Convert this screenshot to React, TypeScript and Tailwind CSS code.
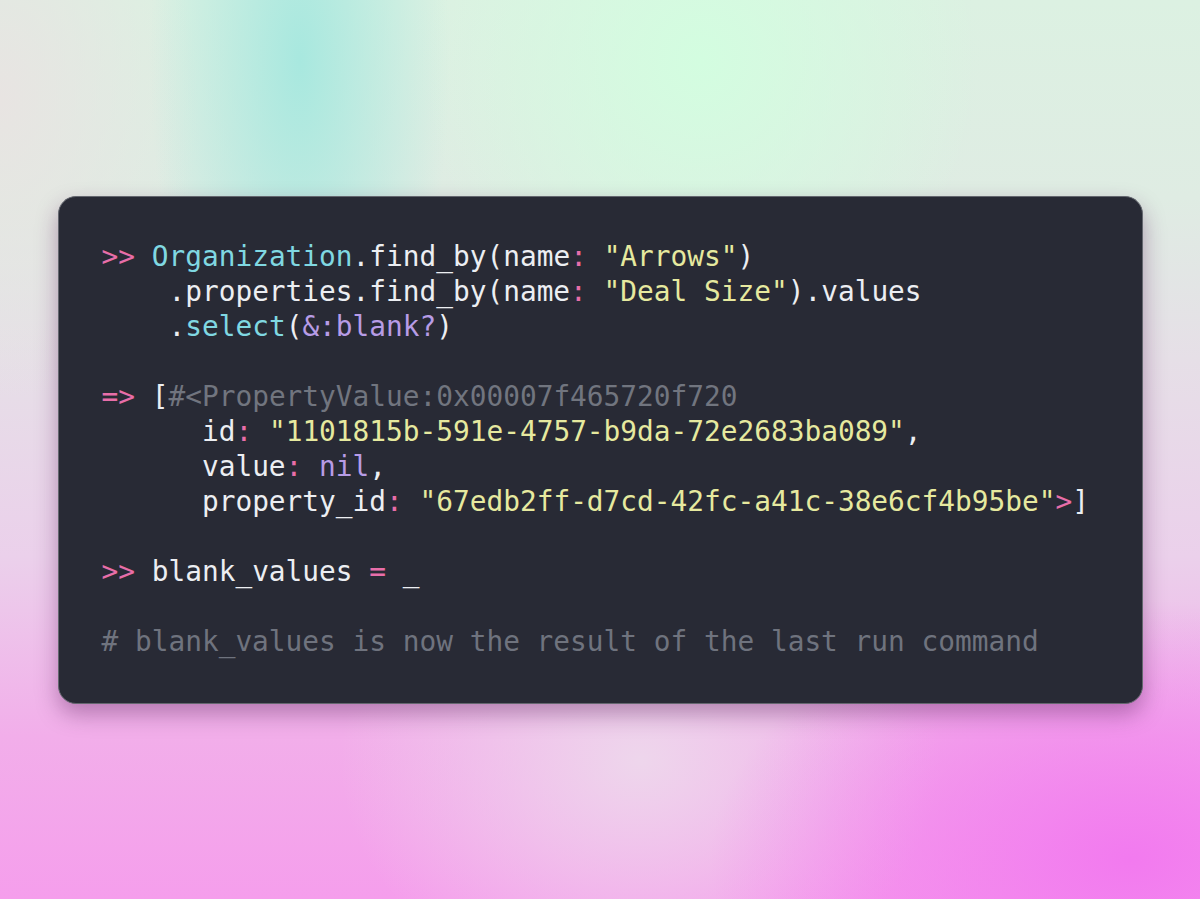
const Prompt = ({ children }: { children: React.ReactNode }) => (
    <span className="text-[#e86ea9]">{children}</span>
);

const Str = ({ children }: { children: React.ReactNode }) => (
    <span className="text-[#e6e99f]">{children}</span>
);

export default function App() {
    return (
        <div className="w-[1200px] h-[899px] flex items-center justify-center bg-[radial-gradient(ellipse_150px_400px_at_300px_60px,#a8e8df_0%,rgba(168,232,223,0.6)_40%,rgba(168,232,223,0)_100%),radial-gradient(ellipse_200px_300px_at_0px_100px,#e8e4e2_0%,rgba(232,228,226,0)_100%),radial-gradient(ellipse_280px_300px_at_700px_60px,#d3fde0_0%,rgba(211,253,224,0)_100%),radial-gradient(ellipse_420px_260px_at_1130px_860px,#f27aef_0%,rgba(242,122,239,0)_100%),radial-gradient(ellipse_300px_240px_at_640px_760px,#eed6ec_0%,rgba(238,214,236,0)_100%),linear-gradient(to_bottom,#dcf1e2_0%,#dfece3_22%,#e6dfe7_40%,#ebd0eb_62%,#f2aeea_82%,#f59eec_100%)]">
            <div className="w-[1085px] rounded-[18px] border-[1.5px] border-[#64676f] bg-[#282a35] px-[43px] pt-[42px] pb-[44px] shadow-[0_10px_22px_rgba(90,30,90,0.4)]">
                <pre className="m-0 whitespace-pre font-['DejaVu_Sans_Mono',monospace] text-[27.8px] leading-[35px] text-[#eceef2]">
                    <Prompt>&gt;&gt;</Prompt> <span className="text-[#80d8e2]">Organization</span>.find_by(name<Prompt>:</Prompt> <Str>"Arrows"</Str>){"\n"}
                    {"    "}.properties.find_by(name<Prompt>:</Prompt> <Str>"Deal Size"</Str>).values{"\n"}
                    {"    "}.<span className="text-[#80d8e2]">select</span>(<span className="text-[#b79ce6]">&amp;:blank?</span>){"\n"}
                    {"\n"}
                    <Prompt>=&gt;</Prompt> [<span className="text-[#71757f]">#&lt;PropertyValue:0x00007f465720f720</span>{"\n"}
                    {"      "}id<Prompt>:</Prompt> <Str>"1101815b-591e-4757-b9da-72e2683ba089"</Str>,{"\n"}
                    {"      "}value<Prompt>:</Prompt> <span className="text-[#b79ce6]">nil</span>,{"\n"}
                    {"      "}property_id<Prompt>:</Prompt> <Str>"67edb2ff-d7cd-42fc-a41c-38e6cf4b95be"</Str><Prompt>&gt;</Prompt>]{"\n"}
                    {"\n"}
                    <Prompt>&gt;&gt;</Prompt> blank_values <Prompt>=</Prompt> _{"\n"}
                    {"\n"}
                    <span className="text-[#6f737e]"># blank_values is now the result of the last run command</span>
                </pre>
            </div>
        </div>
    );
}
